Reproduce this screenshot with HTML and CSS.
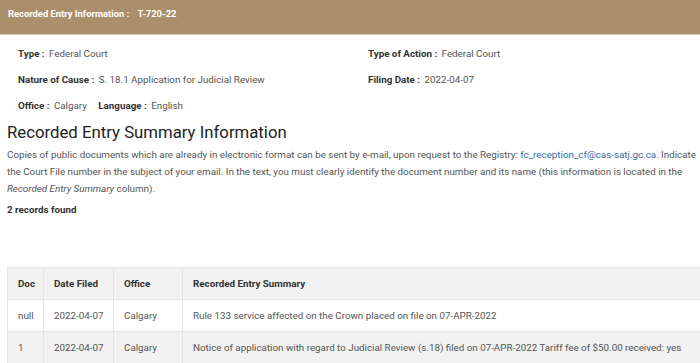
FILE: index.html
```html
<!DOCTYPE html>
<html lang="en">
<head>
    <meta charset="UTF-8">
    <meta name="viewport" content="width=device-width, initial-scale=1.0">
    <title>Recorded Entry Information</title>
    <link rel="stylesheet" href="styles.css">
</head>
<body>
    <div class="title-bar">Recorded Entry Information : <span class="file-no">T-720-22</span></div>

    <div class="details">
        <div class="details-col">
            <div class="detail"><b>Type :</b> Federal Court</div>
            <div class="detail"><b>Nature of Cause :</b> S. 18.1 Application for Judicial Review</div>
            <div class="detail"><b>Office :</b> Calgary <span class="spacer"></span><b>Language :</b> English</div>
        </div>
        <div class="details-col">
            <div class="detail"><b>Type of Action :</b> Federal Court</div>
            <div class="detail"><b>Filing Date :</b> 2022-04-07</div>
        </div>
    </div>

    <div class="summary">
        <h2>Recorded Entry Summary Information</h2>
        <p class="intro">Copies of public documents which are already in electronic format can be sent by e-mail, upon request to the Registry: <a href="#">fc_reception_cf@cas-satj.gc.ca</a>. Indicate the Court File number in the subject of your email. In the text, you must clearly identify the document number and its name (this information is located in the <i>Recorded Entry Summary</i> column).</p>
        <p class="count">2 records found</p>

        <table class="records">
            <colgroup>
                <col class="col-doc">
                <col class="col-date">
                <col class="col-office">
                <col>
            </colgroup>
            <thead>
                <tr>
                    <th>Doc</th>
                    <th>Date Filed</th>
                    <th>Office</th>
                    <th>Recorded Entry Summary</th>
                </tr>
            </thead>
            <tbody>
                <tr>
                    <td>null</td>
                    <td>2022-04-07</td>
                    <td>Calgary</td>
                    <td>Rule 133 service affected on the Crown placed on file on 07-APR-2022</td>
                </tr>
                <tr>
                    <td>1</td>
                    <td>2022-04-07</td>
                    <td>Calgary</td>
                    <td>Notice of application with regard to Judicial Review (s.18) filed on 07-APR-2022 Tariff fee of $50.00 received: yes</td>
                </tr>
            </tbody>
        </table>
    </div>
</body>
</html>
```

FILE: styles.css
```css
body {
    margin: 0;
    font-family: Roboto, "Liberation Sans", Arial, sans-serif;
    font-size: 9.8px;
    color: #555;
    background: #fff;
    overflow: hidden;
}
.title-bar {
    background-color: #ab8f6a;
    border-bottom: 1px solid #d9c9b3;
    color: #fff;
    font-weight: bold;
    font-size: 9.4px;
    padding: 0 8px;
    height: 34px;
    line-height: 28px;
}
.file-no {
    margin-left: 6px;
}
.details {
    display: flex;
    padding: 6px 18px 0;
}
.details-col {
    flex: 0 0 350px;
}
.detail {
    line-height: 26px;
    white-space: nowrap;
}
.detail b {
    color: #333;
    margin-right: 2px;
}
.spacer {
    display: inline-block;
    width: 9px;
}
.summary {
    padding-left: 7px;
    overflow: hidden;
}
h2 {
    margin: 2px 0 0;
    font-size: 16.75px;
    font-weight: normal;
    color: #222;
    line-height: 22px;
}
.intro {
    margin: 3px 0 0;
    line-height: 17px;
}
.intro a {
    color: #2e6da4;
    text-decoration: none;
}
.count {
    margin: 4px 0 0;
    line-height: 17px;
    font-weight: bold;
    color: #333;
}
.records {
    margin-top: 49px;
    width: 700px;
    border-collapse: collapse;
    table-layout: fixed;
}
.col-doc { width: 36px; }
.col-date { width: 70px; }
.col-office { width: 69px; }
.records th,
.records td {
    text-align: left;
    padding: 8px 10px;
    line-height: 15px;
    border: 1px solid #e6e6e6;
    white-space: nowrap;
}
.records th {
    background: #f2f2f2;
    color: #333;
}
.records tbody tr:nth-child(2) td {
    background: #f2f2f2;
}
```
